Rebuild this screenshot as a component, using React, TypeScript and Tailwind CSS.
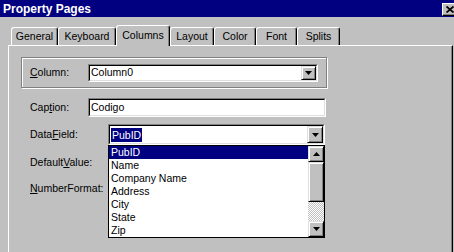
import React from "react"

const tabs = [
  { label: "General", w: "w-[47px]" },
  { label: "Keyboard", w: "w-[58px]" },
  { label: "Columns", w: "w-[54px]", active: true },
  { label: "Layout", w: "w-[44px]" },
  { label: "Color", w: "w-[42px]" },
  { label: "Font", w: "w-[41px]" },
  { label: "Splits", w: "w-[43px]" },
]

const fields = ["PubID", "Name", "Company Name", "Address", "City", "State", "Zip"]

const Arrow = ({ up }: { up?: boolean }) => (
  <svg width="7" height="4" viewBox="0 0 7 4">
    <path d={up ? "M3.5 0 L7 4 L0 4 Z" : "M0 0 L7 0 L3.5 4 Z"} fill="#000" />
  </svg>
)

const RaisedButton = ({ className, up }: { className?: string; up?: boolean }) => (
  <div
    className={`flex items-center justify-center bg-[#c0c0c0] border border-t-[#dfdfdf] border-l-[#dfdfdf] border-r-black border-b-black shadow-[inset_1px_1px_0_#fff,inset_-1px_-1px_0_#808080] ${className}`}
  >
    <Arrow up={up} />
  </div>
)

const Sunken = ({ className, children }: { className?: string; children?: React.ReactNode }) => (
  <div className={`border border-t-[#808080] border-l-[#808080] border-r-white border-b-white ${className}`}>
    <div className="h-full flex items-center bg-white border border-t-black border-l-black border-r-[#dfdfdf] border-b-[#dfdfdf]">
      {children}
    </div>
  </div>
)

export default function App() {
  return (
    <div className="w-[454px] h-[252px] overflow-hidden bg-[#c0c0c0] text-[10.5px] text-black font-['Liberation_Sans',Arial,sans-serif]">
      {/* title bar */}
      <div className="h-[17px] bg-[#000080] flex items-center pl-[3px]">
        <span className="text-white font-bold text-[12px] leading-none">Property Pages</span>
        <div className="ml-auto -mr-[4px] mt-[1px] w-[16px] h-[13px] flex items-center justify-center bg-[#c0c0c0] border border-t-white border-l-white border-r-black border-b-black shadow-[inset_-1px_-1px_0_#808080]">
          <svg width="8" height="7" viewBox="0 0 8 7">
            <path d="M0.5 0.5 L7.5 6.5 M7.5 0.5 L0.5 6.5" stroke="#000" strokeWidth="1.8" />
          </svg>
        </div>
      </div>

      {/* tabs */}
      <div className="mt-[8px] h-[20px] flex items-end pl-[11px]">
        {tabs.map((t) =>
          t.active ? (
            <div
              key={t.label}
              className={`${t.w} h-[21px] -mb-px relative z-10 bg-[#c0c0c0] rounded-t-[3px] border-t border-l border-r border-t-white border-l-white border-r-black shadow-[inset_-1px_0_0_#808080] flex items-start justify-center pt-[2px]`}
            >
              {t.label}
            </div>
          ) : (
            <div
              key={t.label}
              className={`${t.w} h-[18px] rounded-t-[3px] border-t border-l border-r border-t-white border-l-white border-r-black shadow-[inset_-1px_0_0_#808080] flex items-center justify-center pt-[1px]`}
            >
              {t.label}
            </div>
          )
        )}
      </div>

      {/* panel */}
      <div className="ml-[8px] w-[445px] h-[220px] border-t border-l border-r border-t-white border-l-white border-r-black shadow-[inset_-1px_0_0_#808080]">
        <div className="ml-[12px] mt-[11px] w-[306px] h-[31px] border border-[#808080] shadow-[inset_1px_1px_0_#fff,1px_1px_0_#fff] flex items-center pl-[8px] pt-[1px]">
          <span className="w-[58px]">
            <span className="underline">C</span>olumn:
          </span>
          <Sunken className="w-[230px] h-[18px]">
            <span className="pl-[1px] flex-1">Column0</span>
            <RaisedButton className="w-[15px] h-full" />
          </Sunken>
        </div>

        <div className="mt-[10px] ml-[21px] flex items-center">
          <span className="w-[58px]">
            Cap<span className="underline">t</span>ion:
          </span>
          <Sunken className="w-[238px] h-[19px]">
            <span className="pl-[1px]">Codigo</span>
          </Sunken>
        </div>

        <div className="mt-[7px] ml-[21px] flex">
          <div className="w-[78px] flex flex-col">
            <span className="h-[20px] flex items-center pt-[2px]">
              Data<span className="underline">F</span>ield:
            </span>
            <span className="mt-[12px] leading-[13px]">
              Default<span className="underline">V</span>alue:
            </span>
            <span className="mt-[13px] leading-[13px]">
              <span className="underline">N</span>umberFormat:
            </span>
          </div>
          <div className="w-[217px] flex flex-col">
            <Sunken className="h-[21px]">
              <span className="ml-[1px] flex-1 flex items-center">
                <span className="bg-[#000080] text-white px-[1px] leading-[14px]">PubID</span>
              </span>
              <RaisedButton className="w-[16px] h-full" />
            </Sunken>
            <div className="h-[93px] border border-black flex bg-white">
              <div className="flex-1 flex flex-col">
                {fields.map((f, i) => (
                  <div
                    key={f}
                    className={`h-[13px] leading-[13px] pl-[2px] ${i === 0 ? "bg-[#000080] text-white" : ""}`}
                  >
                    {f}
                  </div>
                ))}
              </div>
              <div className="w-[16px] flex flex-col">
                <RaisedButton className="h-[16px]" up />
                <div className="h-[40px] bg-[#c0c0c0] border border-t-[#dfdfdf] border-l-[#dfdfdf] border-r-black border-b-black shadow-[inset_1px_1px_0_#fff,inset_-1px_-1px_0_#808080]" />
                <div className="flex-1 bg-[image:repeating-conic-gradient(#c0c0c0_0_25%,#fff_0_50%)] bg-[length:2px_2px]" />
                <RaisedButton className="h-[16px]" />
              </div>
            </div>
          </div>
        </div>
      </div>
    </div>
  )
}
